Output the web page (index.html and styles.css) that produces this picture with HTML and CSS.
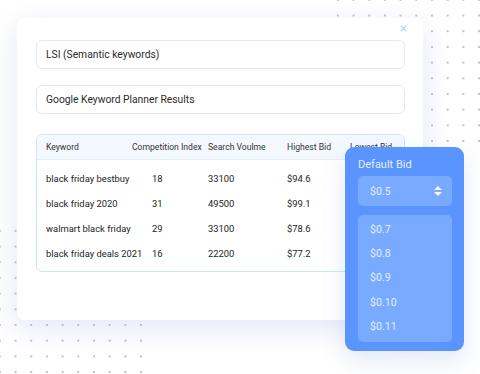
FILE: index.html
```html
<!DOCTYPE html>
<html>
<head>
<meta charset="utf-8">
<link rel="stylesheet" href="styles.css">
</head>
<body>
<div class="stage">
  <div class="dots dots-tr"></div>
  <div class="dots dots-bl"></div>

  <div class="card">
    <span class="close" aria-label="close">
      <svg width="7" height="7" viewBox="0 0 7 7"><path d="M1 1L6 6M6 1L1 6" stroke="#b3d4f5" stroke-width="1.1" stroke-linecap="round"/></svg>
    </span>
    <div class="field">LSI (Semantic keywords)</div>
    <div class="field">Google Keyword Planner Results</div>

    <div class="kw-table">
      <div class="kw-head">
        <span>Keyword</span>
        <span>Competition Index</span>
        <span>Search Voulme</span>
        <span>Highest Bid</span>
        <span>Lowest Bid</span>
      </div>
      <div class="kw-body">
        <div class="kw-row"><span>black friday bestbuy</span><span class="ci">18</span><span>33100</span><span>$94.6</span><span></span></div>
        <div class="kw-row"><span>black friday 2020</span><span class="ci">31</span><span>49500</span><span>$99.1</span><span></span></div>
        <div class="kw-row"><span>walmart black friday</span><span class="ci">29</span><span>33100</span><span>$78.6</span><span></span></div>
        <div class="kw-row"><span>black friday deals 2021</span><span class="ci">16</span><span>22200</span><span>$77.2</span><span></span></div>
      </div>
    </div>
  </div>

  <div class="bid-panel">
    <div class="bid-title">Default Bid</div>
    <div class="bid-select">
      <span>$0.5</span>
      <span class="arrows"><i class="up"></i><i class="down"></i></span>
    </div>
    <ul class="bid-list">
      <li>$0.7</li>
      <li>$0.8</li>
      <li>$0.9</li>
      <li>$0.10</li>
      <li>$0.11</li>
    </ul>
  </div>
</div>
</body>
</html>
```

FILE: styles.css
```css
* { box-sizing: border-box; }
html, body { margin: 0; padding: 0; background: #fff; }
body { font-family: Roboto, "Liberation Sans", Arial, sans-serif; color: #2a2a2a; }

.stage {
  position: relative;
  width: 480px;
  height: 374px;
  overflow: hidden;
  padding: 18px 0 0 17px;
}

.dots {
  position: absolute;
  background-image: radial-gradient(circle, #bfc0c8 0.9px, rgba(255,255,255,0) 1.3px);
  background-size: 15.7px 15.7px;
}
.dots-tr { left: 330px; top: -8px; width: 160px; height: 159px; }
.dots-bl { left: -8px; top: 223px; width: 158px; height: 160px; }

.card {
  position: relative;
  width: 406px;
  height: 302px;
  background: #fff;
  border-radius: 7px;
  box-shadow: 0 8px 28px rgba(170, 180, 230, 0.33);
  padding: 22px 18px 0 19px;
  display: flex;
  flex-direction: column;
}

.close {
  position: absolute;
  top: 7px;
  right: 16px;
  width: 7px;
  height: 7px;
  display: flex;
}

.field {
  height: 29px;
  border: 1px solid #e7e8ec;
  border-radius: 6px;
  font-size: 10.3px;
  line-height: 27px;
  padding-left: 9px;
  color: #2b2b2b;
}
.field + .field { margin-top: 16px; }

.kw-table {
  margin-top: 20px;
  height: 138px;
  border: 1px solid #cfe5f8;
  border-radius: 6px;
  overflow: hidden;
}
.kw-head, .kw-row {
  display: grid;
  grid-template-columns: 86px 76px 79px 63px 1fr;
  padding-left: 9px;
  align-items: center;
  white-space: nowrap;
}
.kw-head {
  height: 25px;
  background: #f4f9ff;
  border-bottom: 1px solid #e1eefb;
  font-size: 8.6px;
  color: #333;
}
.kw-body { padding-top: 6px; }
.kw-row {
  height: 25px;
  font-size: 9.4px;
  color: #222;
}
.kw-row .ci { padding-left: 20px; }

.bid-panel {
  position: absolute;
  left: 345px;
  top: 147px;
  width: 119px;
  height: 204px;
  background: #5a94fe;
  border-radius: 9px;
  box-shadow: 0 10px 24px rgba(90, 120, 200, 0.16);
  padding: 11px 12px 0 13px;
  color: #e4edff;
}
.bid-title {
  font-size: 11px;
  line-height: 14px;
}
.bid-select {
  margin-top: 4px;
  height: 30px;
  background: #78aaff;
  border-radius: 5px;
  display: flex;
  align-items: center;
  justify-content: space-between;
  padding: 0 10px 0 12px;
  font-size: 10.6px;
}
.arrows {
  display: flex;
  flex-direction: column;
  gap: 2px;
}
.arrows i {
  display: block;
  width: 0;
  height: 0;
  border-left: 4px solid transparent;
  border-right: 4px solid transparent;
}
.arrows .up { border-bottom: 4.5px solid #f2f6ff; }
.arrows .down { border-top: 4.5px solid #f2f6ff; }

.bid-list {
  list-style: none;
  margin: 9px 0 0;
  padding: 2.5px 0 0 12px;
  height: 127px;
  background: #78aaff;
  border-radius: 5px;
  font-size: 10.6px;
}
.bid-list li {
  height: 24.4px;
  line-height: 24.4px;
}
```
